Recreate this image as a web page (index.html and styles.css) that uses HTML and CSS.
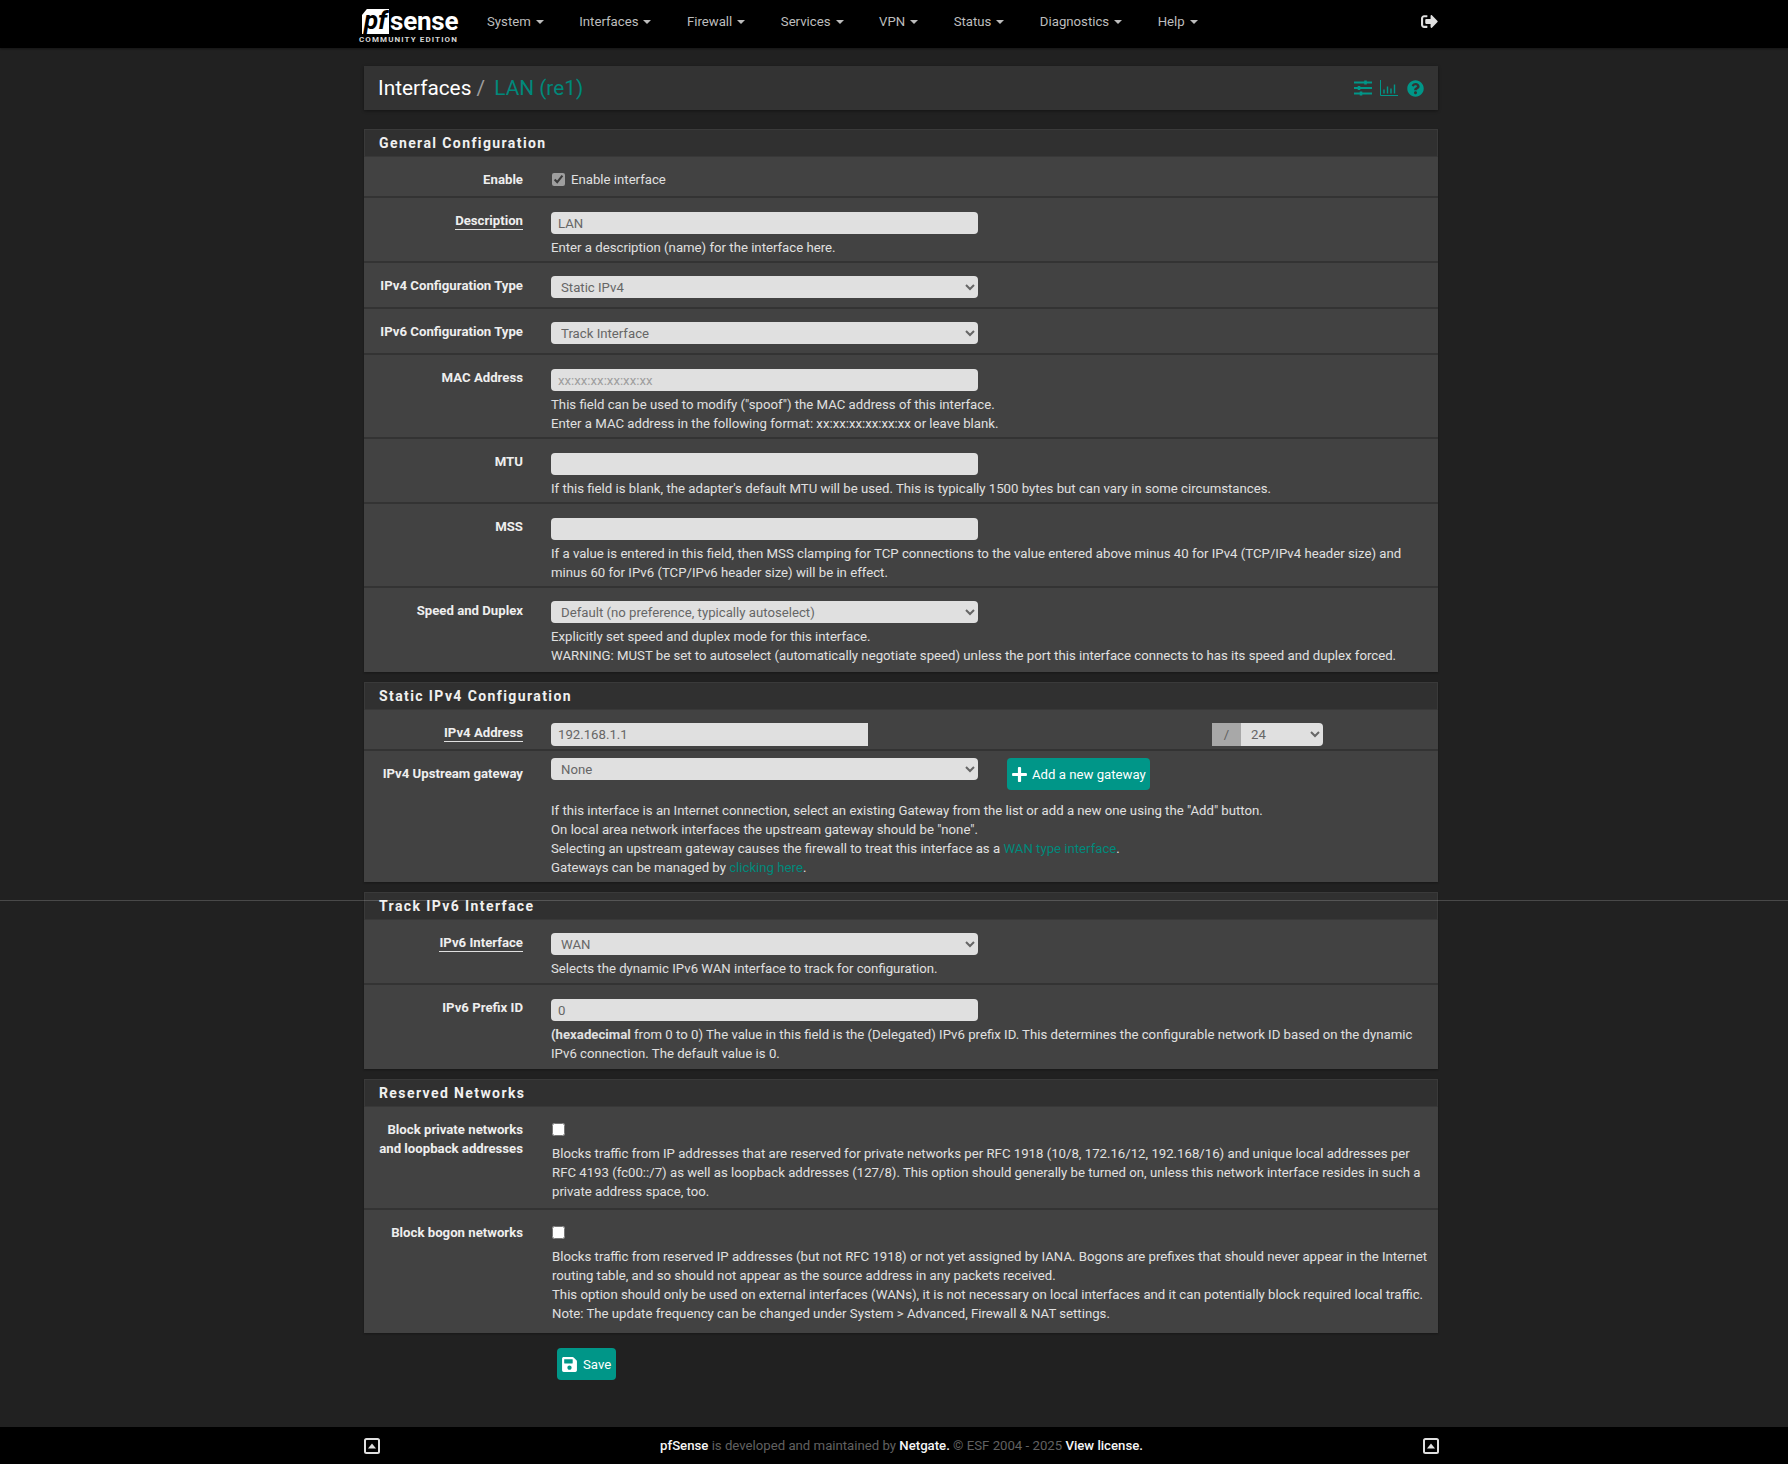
FILE: index.html
```html
<!DOCTYPE html>
<html lang="en">
  <head>
    <meta charset="UTF-8" />
    <title>pfSense - Interfaces: LAN (re1)</title>
    <link rel="stylesheet" href="styles.css">
  </head>
  <body>
    <nav class="topbar">
      <a class="logo">
        <span class="logo__top"><span class="logo__pf">pf</span><span class="logo__sense">sense</span></span>
        <span class="logo__edition">COMMUNITY EDITION</span>
      </a>
      <ul class="menu">
        <li>System</li>
        <li>Interfaces</li>
        <li>Firewall</li>
        <li>Services</li>
        <li>VPN</li>
        <li>Status</li>
        <li>Diagnostics</li>
        <li>Help</li>
      </ul>
      <svg class="logout" viewBox="0 0 512 512"><path d="M497 273L329 441c-15 15-41 4.5-41-17v-96H152c-13.3 0-24-10.7-24-24v-96c0-13.3 10.7-24 24-24h136V88c0-21.4 25.9-32 41-17l168 168c9.3 9.4 9.3 24.6 0 34zM192 436v-40c0-6.6-5.4-12-12-12H96c-17.7 0-32-14.3-32-32V160c0-17.7 14.3-32 32-32h84c6.6 0 12-5.4 12-12V76c0-6.6-5.4-12-12-12H96c-53 0-96 43-96 96v192c0 53 43 96 96 96h84c6.6 0 12-5.4 12-12z"/></svg>
    </nav>

    <main class="container">
      <header class="crumbs">
        <h1 class="crumbs__title">Interfaces <span class="crumbs__sep">/</span> <span class="crumbs__current">LAN (re1)</span></h1>
        <div class="crumbs__icons">
          <svg class="icon-sliders" viewBox="0 0 18 16">
            <path d="M0 2.5h18M0 8h18M0 13.5h18" stroke-width="1.8"/>
            <path d="M11.5 0.5v4M5 6v4M7 11.5v4" stroke-width="2.6"/>
          </svg>
          <svg class="icon-chart" viewBox="0 0 18 16">
            <path d="M0.5 0v15.5H18" stroke-width="1"/>
            <path d="M4 13.5v-4M7.5 13.5v-7M11 13.5v-5M14.5 13.5v-9" stroke-width="1.4"/>
          </svg>
          <svg class="icon-help" viewBox="0 0 512 512"><path d="M504 256c0 136.997-111.043 248-248 248S8 392.997 8 256C8 119.083 119.043 8 256 8s248 111.083 248 248zM262.655 90c-54.497 0-89.255 22.957-116.549 63.758-3.536 5.286-2.353 12.415 2.715 16.258l34.699 26.31c5.205 3.947 12.621 3.008 16.665-2.122 17.864-22.658 30.113-35.797 57.303-35.797 20.429 0 45.698 13.148 45.698 32.958 0 14.976-12.363 22.667-32.534 33.976C247.128 238.528 216 254.941 216 296v4c0 6.627 5.373 12 12 12h56c6.627 0 12-5.373 12-12v-1.333c0-28.462 83.186-29.647 83.186-106.667 0-58.002-60.165-102-116.531-102zM256 338c-25.365 0-46 20.635-46 46 0 25.364 20.635 46 46 46s46-20.636 46-46c0-25.365-20.635-46-46-46z"/></svg>
        </div>
      </header>

      <section class="panel">
        <h2 class="panel__head">General Configuration</h2>
        <div class="row">
          <div class="row__label">Enable</div>
          <div class="row__body">
            <label class="check"><input type="checkbox" checked /> Enable interface</label>
          </div>
        </div>
        <div class="row row--input">
          <div class="row__label"><span class="req">Description</span></div>
          <div class="row__body">
            <input class="field" type="text" value="LAN" />
            <p class="help">Enter a description (name) for the interface here.</p>
          </div>
        </div>
        <div class="row">
          <div class="row__label">IPv4 Configuration Type</div>
          <div class="row__body">
            <select class="field"><option>Static IPv4</option></select>
          </div>
        </div>
        <div class="row">
          <div class="row__label">IPv6 Configuration Type</div>
          <div class="row__body">
            <select class="field"><option>Track Interface</option></select>
          </div>
        </div>
        <div class="row row--input">
          <div class="row__label">MAC Address</div>
          <div class="row__body">
            <input class="field" type="text" placeholder="xx:xx:xx:xx:xx:xx" />
            <p class="help">This field can be used to modify ("spoof") the MAC address of this interface.<br />Enter a MAC address in the following format: xx:xx:xx:xx:xx:xx or leave blank.</p>
          </div>
        </div>
        <div class="row row--input">
          <div class="row__label">MTU</div>
          <div class="row__body">
            <input class="field" type="text" />
            <p class="help">If this field is blank, the adapter's default MTU will be used. This is typically 1500 bytes but can vary in some circumstances.</p>
          </div>
        </div>
        <div class="row row--input">
          <div class="row__label">MSS</div>
          <div class="row__body">
            <input class="field" type="text" />
            <p class="help">If a value is entered in this field, then MSS clamping for TCP connections to the value entered above minus 40 for IPv4 (TCP/IPv4 header size) and<br />minus 60 for IPv6 (TCP/IPv6 header size) will be in effect.</p>
          </div>
        </div>
        <div class="row">
          <div class="row__label">Speed and Duplex</div>
          <div class="row__body">
            <select class="field"><option>Default (no preference, typically autoselect)</option></select>
            <p class="help">Explicitly set speed and duplex mode for this interface.<br />WARNING: MUST be set to autoselect (automatically negotiate speed) unless the port this interface connects to has its speed and duplex forced.</p>
          </div>
        </div>
      </section>

      <section class="panel">
        <h2 class="panel__head">Static IPv4 Configuration</h2>
        <div class="row row--addr">
          <div class="row__label"><span class="req">IPv4 Address</span></div>
          <div class="row__body addr">
            <input class="field field--addr" type="text" value="192.168.1.1" />
            <div class="cidr">
              <span class="cidr__slash">/</span>
              <select class="field field--cidr"><option>24</option></select>
            </div>
          </div>
        </div>
        <div class="row row--gateway">
          <div class="row__label">IPv4 Upstream gateway</div>
          <div class="row__body">
            <div class="gateway">
              <select class="field"><option>None</option></select>
              <button class="btn btn--add">
                <svg class="btn__icon" viewBox="0 0 448 512"><path d="M416 208H272V64c0-17.67-14.33-32-32-32h-32c-17.67 0-32 14.33-32 32v144H32c-17.67 0-32 14.33-32 32v32c0 17.67 14.33 32 32 32h144v144c0 17.67 14.33 32 32 32h32c17.67 0 32-14.33 32-32V304h144c17.67 0 32-14.33 32-32v-32c0-17.67-14.33-32-32-32z"/></svg>
                Add a new gateway
              </button>
            </div>
            <p class="help">If this interface is an Internet connection, select an existing Gateway from the list or add a new one using the "Add" button.<br />On local area network interfaces the upstream gateway should be "none".<br />Selecting an upstream gateway causes the firewall to treat this interface as a <a>WAN type interface</a>.<br />Gateways can be managed by <a>clicking here</a>.</p>
          </div>
        </div>
      </section>

      <section class="panel">
        <h2 class="panel__head">Track IPv6 Interface</h2>
        <div class="row">
          <div class="row__label"><span class="req">IPv6 Interface</span></div>
          <div class="row__body">
            <select class="field"><option>WAN</option></select>
            <p class="help">Selects the dynamic IPv6 WAN interface to track for configuration.</p>
          </div>
        </div>
        <div class="row row--input">
          <div class="row__label">IPv6 Prefix ID</div>
          <div class="row__body">
            <input class="field" type="text" value="0" />
            <p class="help"><b>(hexadecimal</b> from 0 to 0) The value in this field is the (Delegated) IPv6 prefix ID. This determines the configurable network ID based on the dynamic<br />IPv6 connection. The default value is 0.</p>
          </div>
        </div>
      </section>

      <section class="panel">
        <h2 class="panel__head">Reserved Networks</h2>
        <div class="row row--check">
          <div class="row__label">Block private networks<br />and loopback addresses</div>
          <div class="row__body">
            <label class="check"><input type="checkbox" /></label>
            <p class="help">Blocks traffic from IP addresses that are reserved for private networks per RFC 1918 (10/8, 172.16/12, 192.168/16) and unique local addresses per<br />RFC 4193 (fc00::/7) as well as loopback addresses (127/8). This option should generally be turned on, unless this network interface resides in such a<br />private address space, too.</p>
          </div>
        </div>
        <div class="row row--check">
          <div class="row__label">Block bogon networks</div>
          <div class="row__body">
            <label class="check"><input type="checkbox" /></label>
            <p class="help">Blocks traffic from reserved IP addresses (but not RFC 1918) or not yet assigned by IANA. Bogons are prefixes that should never appear in the Internet<br />routing table, and so should not appear as the source address in any packets received.<br />This option should only be used on external interfaces (WANs), it is not necessary on local interfaces and it can potentially block required local traffic.<br />Note: The update frequency can be changed under System &gt; Advanced, Firewall &amp; NAT settings.</p>
          </div>
        </div>
      </section>

      <div class="actions">
        <button class="btn btn--save">
          <svg class="btn__icon btn__icon--save" viewBox="0 0 448 512"><path d="M433.941 129.941l-83.882-83.882A48 48 0 0 0 316.118 32H48C21.49 32 0 53.49 0 80v352c0 26.51 21.49 48 48 48h352c26.51 0 48-21.49 48-48V163.882a48 48 0 0 0-14.059-33.941zM224 416c-35.346 0-64-28.654-64-64 0-35.346 28.654-64 64-64s64 28.654 64 64c0 35.346-28.654 64-64 64zm96-304.52V212c0 6.627-5.373 12-12 12H76c-6.627 0-12-5.373-12-12V108c0-6.627 5.373-12 12-12h228.52c3.183 0 6.235 1.264 8.485 3.515l3.48 3.48A11.996 11.996 0 0 1 320 111.48z"/></svg>
          Save
        </button>
      </div>
    </main>

    <footer class="footer">
      <svg class="footer__icon" viewBox="0 0 16 16"><rect x="1" y="1" width="14" height="14" rx="1.5"/><path d="M4 10.5L8 5.5l4 5z"/></svg>
      <p class="footer__text"><b>pfSense</b> is developed and maintained by <b>Netgate.</b> &copy; ESF 2004 - 2025 <b>View license.</b></p>
      <svg class="footer__icon" viewBox="0 0 16 16"><rect x="1" y="1" width="14" height="14" rx="1.5"/><path d="M4 10.5L8 5.5l4 5z"/></svg>
    </footer>

    <div class="scan-line"></div>
  </body>
</html>
```

FILE: styles.css
```css
* {
  margin: 0;
  padding: 0;
  box-sizing: border-box;
}

body {
  position: relative;
  min-height: 100vh;
  display: flex;
  flex-direction: column;
  font-family: Roboto, "Liberation Sans", sans-serif;
  font-size: 13.2px;
  line-height: 19px;
  color: #e0e0e0;
  background-color: #212121;
}

/* top bar */
.topbar {
  height: 48px;
  padding: 0 350px 0 359px;
  display: flex;
  align-items: flex-start;
  background-color: #000;
  box-shadow: 0 1px 2px rgba(0, 0, 0, 0.4);
}

.logo {
  width: 100px;
  height: 44px;
  display: flex;
  flex-direction: column;
}

.logo__top {
  height: 30px;
  margin-top: 5px;
  display: flex;
  align-items: flex-end;
}

.logo__pf {
  width: 27px;
  height: 25px;
  margin-left: 3px;
  background-color: #fff;
  color: #000;
  font-size: 26px;
  line-height: 23px;
  font-weight: 700;
  font-style: italic;
  text-align: center;
  clip-path: polygon(0 100%, 0 24%, 18% 0, 100% 0, 100% 100%);
}

.logo__sense {
  margin-left: 1px;
  font-size: 26px;
  line-height: 25px;
  font-weight: 700;
  color: #fff;
  letter-spacing: -0.2px;
}

.logo__edition {
  margin-top: 1px;
  font-size: 8px;
  line-height: 9px;
  font-weight: 700;
  letter-spacing: 1.1px;
  white-space: nowrap;
  color: #d5d5d5;
}

.menu {
  margin-left: 28px;
  display: flex;
  gap: 35.5px;
  list-style: none;
  line-height: 44px;
  color: #bdbdbd;
}

.menu li {
  display: flex;
  align-items: center;
  gap: 5px;
}

.menu li::after {
  content: "";
  border-top: 4px solid #bdbdbd;
  border-left: 4px solid transparent;
  border-right: 4px solid transparent;
}

.logout {
  width: 17px;
  height: 17px;
  margin: 13px 0 0 auto;
  fill: #e0e0e0;
}

/* page */
.container {
  width: 1074px;
  margin: 18px 0 0 364px;
  flex: 1;
}

.crumbs {
  height: 44px;
  padding: 0 14px;
  margin-bottom: 19px;
  display: flex;
  align-items: center;
  justify-content: space-between;
  background-color: #333;
  box-shadow: 0 1px 3px rgba(0, 0, 0, 0.4);
}

.crumbs__title {
  font-size: 20.8px;
  line-height: 30px;
  font-weight: 400;
  color: #fff;
}

.crumbs__sep {
  color: #9e9e9e;
  margin: 0 4px 0 0;
}

.crumbs__current {
  color: #00897b;
}

.crumbs__icons {
  display: flex;
  align-items: center;
  gap: 8px;
}

.crumbs__icons svg {
  width: 18px;
  height: 16px;
  fill: #009688;
  stroke: #009688;
}

.crumbs__icons .icon-help {
  stroke: none;
  width: 17px;
  height: 17px;
  margin-left: 1px;
}

.icon-sliders,
.icon-chart {
  fill: none !important;
}

.panel {
  margin-bottom: 10px;
  background-color: #424242;
  box-shadow: 0 1px 2px rgba(0, 0, 0, 0.3);
}

.panel__head {
  height: 28px;
  padding: 0 14px;
  font-size: 14px;
  line-height: 27px;
  font-weight: 700;
  letter-spacing: 1.4px;
  color: #f0f0f0;
  background-color: #303030;
  border: 1px solid #3a3a3a;
  border-bottom-color: #383838;
}

.row {
  display: flex;
  padding: 13px 0 5px;
  border-bottom: 2px solid #333;
}

.row:last-child {
  border-bottom-color: #424242;
}

.row--input {
  padding-bottom: 4px;
}

.row--addr {
  padding: 13px 0 3px;
}

.row--gateway {
  padding: 7px 0 3px;
}

.row--gateway .row__label {
  padding-top: 6px;
}

.row--check {
  padding-bottom: 7px;
}

.row--check:last-child {
  padding-bottom: 8px;
}

.row__label {
  width: 159px;
  flex-shrink: 0;
  text-align: right;
  font-weight: 700;
  color: #eee;
}

.req {
  display: inline-block;
  line-height: 16px;
  border-bottom: 1px solid #e0e0e0;
}

.row__body {
  margin-left: 28px;
  width: 880px;
}

.field {
  display: block;
  width: 427px;
  height: 22px;
  margin: 1px 0 4px;
  padding: 0 7px;
  font-family: inherit;
  font-size: 13.2px;
  color: #666;
  background-color: #e0e0e0;
  border: 0;
  border-radius: 4px;
  outline: 0;
}

.field::placeholder {
  color: #9e9e9e;
}

select.field {
  margin: 0 0 4px;
  padding-left: 6px;
}

.help {
  line-height: 19px;
  color: #e0e0e0;
  white-space: nowrap;
}

.help a {
  color: #00897b;
}

.check {
  display: flex;
  align-items: center;
  gap: 6px;
  height: 19px;
  margin-bottom: 2px;
}

.row--check .check {
  margin-bottom: 5px;
}

.row--check .help {
  margin-left: 1px;
}

.check input {
  width: 13px;
  height: 13px;
  margin-left: 1px;
  accent-color: #9e9e9e;
}

/* address row */
.addr {
  display: flex;
  width: 772px;
}

.field--addr,
select.field--cidr {
  height: 23px;
  margin: 0;
}

.field--addr {
  width: 317px;
  border-radius: 4px 0 0 4px;
}

.cidr {
  margin-left: auto;
  display: flex;
}

.cidr__slash {
  width: 29px;
  height: 23px;
  line-height: 23px;
  text-align: center;
  color: #616161;
  background-color: #a8a8a8;
}

.field--cidr {
  width: 82px;
  border-radius: 0 4px 4px 0;
}

/* gateway row */
.gateway {
  display: flex;
  align-items: flex-start;
  gap: 29px;
  margin-bottom: 11px;
}

.gateway .field {
  margin: 0;
}

.btn {
  display: flex;
  align-items: center;
  border: 0;
  border-radius: 4px;
  font-family: inherit;
  font-size: 13.2px;
  color: #fff;
  background-color: #009688;
}

.btn--add {
  width: 143px;
  height: 32px;
  padding-left: 4px;
  gap: 4px;
}

.btn__icon {
  width: 17px;
  height: 17px;
  fill: #fff;
}

.actions {
  margin: 15px 0 0 193px;
}

.btn--save {
  width: 59px;
  height: 32px;
  padding-left: 4px;
  gap: 5px;
}

/* footer */
.footer {
  height: 37px;
  padding: 0 349px 0 364px;
  display: flex;
  align-items: center;
  justify-content: space-between;
  background-color: #000;
  color: #616161;
}

.footer b {
  font-weight: 500;
  color: #f5f5f5;
}

.footer__icon {
  width: 16px;
  height: 16px;
}

.footer__icon rect {
  fill: none;
  stroke: #e0e0e0;
  stroke-width: 2;
}

.footer__icon path {
  fill: #e0e0e0;
}

/* thin line running right across the capture */
.scan-line {
  position: absolute;
  top: 900px;
  left: 0;
  right: 0;
  height: 1px;
  background-color: rgba(255, 255, 255, 0.18);
}
```
